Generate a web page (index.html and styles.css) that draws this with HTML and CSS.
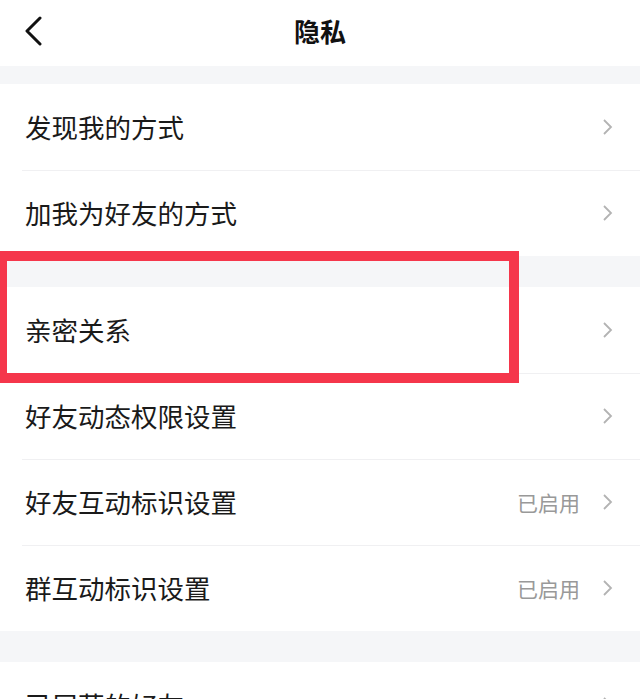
FILE: index.html
```html
<!DOCTYPE html>
<html lang="zh-CN">
<head>
<meta charset="utf-8">
<title>隐私</title>
<link rel="stylesheet" href="styles.css">
</head>
<body>
<div class="page">
  <header class="nav">
    <svg class="back" width="20" height="30" viewBox="0 0 20 30"><path d="M17 2 L4 15 L17 28" fill="none" stroke="#111" stroke-width="3" stroke-linecap="round" stroke-linejoin="round"/></svg>
    <h1 class="title">隐私</h1>
  </header>
  <div class="gap gap-first"></div>
  <section class="group">
    <div class="row"><span class="label">发现我的方式</span><span class="right"><svg class="chev" width="11" height="18" viewBox="0 0 11 18"><path d="M2 2 L9 9 L2 16" fill="none" stroke="#b3b3b3" stroke-width="1.8"/></svg></span></div>
    <div class="row"><span class="label">加我为好友的方式</span><span class="right"><svg class="chev" width="11" height="18" viewBox="0 0 11 18"><path d="M2 2 L9 9 L2 16" fill="none" stroke="#b3b3b3" stroke-width="1.8"/></svg></span></div>
  </section>
  <div class="gap"></div>
  <section class="group">
    <div class="row"><span class="label">亲密关系</span><span class="right"><svg class="chev" width="11" height="18" viewBox="0 0 11 18"><path d="M2 2 L9 9 L2 16" fill="none" stroke="#b3b3b3" stroke-width="1.8"/></svg></span></div>
    <div class="row"><span class="label">好友动态权限设置</span><span class="right"><svg class="chev" width="11" height="18" viewBox="0 0 11 18"><path d="M2 2 L9 9 L2 16" fill="none" stroke="#b3b3b3" stroke-width="1.8"/></svg></span></div>
    <div class="row"><span class="label">好友互动标识设置</span><span class="right"><span class="value">已启用</span><svg class="chev" width="11" height="18" viewBox="0 0 11 18"><path d="M2 2 L9 9 L2 16" fill="none" stroke="#b3b3b3" stroke-width="1.8"/></svg></span></div>
    <div class="row"><span class="label">群互动标识设置</span><span class="right"><span class="value">已启用</span><svg class="chev" width="11" height="18" viewBox="0 0 11 18"><path d="M2 2 L9 9 L2 16" fill="none" stroke="#b3b3b3" stroke-width="1.8"/></svg></span></div>
  </section>
  <div class="gap"></div>
  <section class="group">
    <div class="row"><span class="label">已屏蔽的好友</span><span class="right"><svg class="chev" width="11" height="18" viewBox="0 0 11 18"><path d="M2 2 L9 9 L2 16" fill="none" stroke="#b3b3b3" stroke-width="1.8"/></svg></span></div>
  </section>
  <div class="highlight"></div>
</div>
</body>
</html>
```

FILE: styles.css
```css
html, body {
  margin: 0;
  padding: 0;
  background: #ffffff;
}
body {
  font-family: "Noto Sans CJK SC", "Noto Sans", sans-serif;
  color: #1a1a1a;
  overflow: hidden;
}
.page {
  position: relative;
  width: 640px;
  height: 699px;
  overflow: hidden;
}
.nav {
  box-sizing: border-box;
  height: 66px;
  padding-bottom: 5px;
  display: flex;
  align-items: center;
  justify-content: center;
  position: relative;
  background: #fff;
}
.back {
  position: absolute;
  left: 23px;
  top: 16px;
}
.title {
  margin: 0;
  font-size: 26px;
  font-weight: 700;
  color: #111;
  line-height: 1;
}
.gap {
  background: #f5f6f8;
  height: 31px;
}
.gap-first {
  height: 18px;
}
.group {
  background: #fff;
}
.row {
  box-sizing: border-box;
  height: 86px;
  display: flex;
  align-items: center;
  justify-content: space-between;
  padding: 0 27px 0 25px;
  position: relative;
}
.row + .row::before {
  content: "";
  position: absolute;
  left: 22px;
  right: 0;
  top: 0;
  height: 1px;
  background: #f0f0f2;
}
.label {
  font-size: 26.5px;
  line-height: 1;
  color: #1a1a1a;
}
.right {
  display: flex;
  align-items: center;
}
.value {
  font-size: 21px;
  color: #999;
  margin-right: 22px;
}
.chev {
  display: block;
}
.highlight {
  position: absolute;
  left: -3px;
  top: 251px;
  width: 522px;
  height: 132px;
  box-sizing: border-box;
  border: 10px solid #f5364b;
}
```
